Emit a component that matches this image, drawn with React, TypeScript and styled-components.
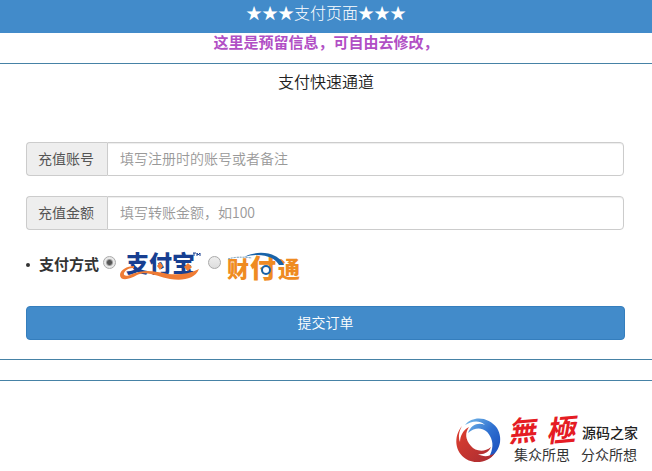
import React, { useState } from "react";
import styled, { createGlobalStyle } from "styled-components";

const GlobalStyle = createGlobalStyle`
  * { box-sizing: border-box; }
  body {
    margin: 0;
    background: #fff;
    color: #333;
    font-family: "Noto Sans CJK SC", sans-serif;
    font-size: 14px;
    line-height: 20px;
  }
`;

const Header = styled.header`
  display: flex;
  justify-content: center;
  padding: 2px 0 11px;
  background: #428bca;
  color: #fff;
`;

const HeaderTitle = styled.h1`
  margin: 0;
  font-size: 16px;
  line-height: 20px;
  font-weight: 300;
`;

const Notice = styled.p`
  margin: 0;
  padding-bottom: 12px;
  border-bottom: 1px solid #4682a6;
  text-align: center;
  font-size: 15px;
  line-height: 18px;
  font-weight: 700;
  color: #b14fc5;
`;

const Title = styled.h2`
  margin: 7px 0 51px;
  text-align: center;
  font-size: 16px;
  line-height: 20px;
  font-weight: 350;
  color: #222;
`;

const Form = styled.form`
  display: flex;
  flex-direction: column;
  gap: 20px;
  padding: 0 27px 19px 26px;
  border-bottom: 1px solid #4682a6;
`;

const Group = styled.div`
  display: flex;
  height: 34px;
  margin-right: 1px;
`;

const Addon = styled.label`
  display: flex;
  align-items: center;
  padding: 0 13px 2px 11px;
  border: 1px solid #ccc;
  border-right: 0;
  border-radius: 4px 0 0 4px;
  background: #eee;
  color: #555;
  white-space: nowrap;
`;

const Input = styled.input`
  flex: 1;
  min-width: 0;
  padding: 5px 12px 7px;
  border: 1px solid #ccc;
  border-radius: 0 4px 4px 0;
  box-shadow: inset 0 1px 1px rgba(0, 0, 0, 0.075);
  background: #fff;
  font: inherit;
  font-weight: 350;
  color: #555;
  &::placeholder { color: #999; opacity: 1; }
`;

const Methods = styled.fieldset`
  display: flex;
  align-items: center;
  height: 36px;
  margin: 0;
  padding: 0;
  border: 0;
`;

const MethodsLabel = styled.span`
  display: flex;
  align-items: center;
  gap: 9px;
  margin-right: 4px;
  padding-bottom: 8px;
  font-size: 15px;
  font-weight: 700;
  &::before {
    content: "";
    width: 4px;
    height: 4px;
    margin-top: 2px;
    border-radius: 50%;
    background: #333;
  }
`;

const Method = styled.label`
  display: flex;
  align-items: center;
  gap: 4px;
  margin-right: 6px;
`;

const Radio = styled.input`
  appearance: none;
  flex: none;
  width: 13px;
  height: 13px;
  margin: 0 0 11px;
  border: 1px solid #aaa;
  border-radius: 50%;
  background: linear-gradient(#eee, #ddd);
  &:checked {
    background: radial-gradient(circle, #555 0 2px, #e8e8e8 4px);
  }
`;

const Submit = styled.button`
  height: 34px;
  padding: 0 0 2px;
  border: 1px solid #357ebd;
  border-radius: 4px;
  background: #428bca;
  color: #fff;
  font: inherit;
  font-weight: 350;
`;

const Divider = styled.hr`
  margin: 20px 0 0;
  border: 0;
  border-top: 1px solid #4682a6;
`;

const Footer = styled.footer`
  display: flex;
  justify-content: flex-end;
  padding: 32px 10px 0;
`;

const Logo = styled.svg`
  display: block;
  flex: none;
  overflow: visible;
  font-family: "Noto Sans CJK SC", sans-serif;
`;

function AlipayLogo() {
  return (
    <Logo width="82" height="36" viewBox="0 0 82 36" role="img" aria-label="支付宝">
      <text x="6" y="22" fontSize="23" fontWeight="900" fill="#173f91">支付宝</text>
      <path d="M14 16C7 16 0 20 0 25C0 31 9 30 17 25C27 20 38 27 50 29C63 31 75 29 79 19C69 24 59 25 48 24C35 21 24 19 12 24C7 27 3 26 4 23C6 19 10 18 14 18Z" fill="#ef7c35" />
      <path d="M40 12l3 4-3 4-3-4zM68 13l4 4-4 4-4-4z" fill="#ef7c35" />
      <path d="M73 3h3M74 3v3M77 6V3l1 2L80 3v3" fill="none" stroke="#173f91" strokeWidth="1" />
    </Logo>
  );
}

function TenpayLogo() {
  return (
    <Logo width="80" height="36" viewBox="0 0 80 36" role="img" aria-label="财付通">
      <g fontWeight="900" fill="#ef8b22">
        <text x="2" y="27" fontSize="22">财</text>
        <text x="25" y="28" fontSize="26">付</text>
        <text x="53" y="27" fontSize="22">通</text>
      </g>
      <path d="M19 7C34 -1 54 3 59 15L54 15C50 7 36 2 19 7Z" fill="#1863a9" />
      <path d="M3 9Q12 6 27 8" fill="none" stroke="#668fad" strokeWidth="1" strokeDasharray="2 1" />
      <circle cx="41" cy="20" r="4" fill="#fff" stroke="#1863a9" strokeWidth="2" />
    </Logo>
  );
}

function SiteLogo() {
  return (
    <Logo width="186" height="54" viewBox="0 0 186 54" role="img" aria-label="無極源码之家 集众所思 分众所想">
      <defs>
        <linearGradient id="blue" x1="0" y1="0" x2="1" y2="1">
          <stop stopColor="#79bdea" /><stop offset="0.5" stopColor="#2f70d0" /><stop offset="1" stopColor="#1549ba" />
        </linearGradient>
        <linearGradient id="red" x1="0" y1="0" x2="1" y2="1">
          <stop stopColor="#e04030" /><stop offset="1" stopColor="#a72b31" />
        </linearGradient>
      </defs>
      <path d="M9 12C17 2 33 4 41 15C48 27 43 40 32 46C36 39 38 32 35 25C31 15 21 12 12 20C15 11 23 9 29 12C22 6 15 9 9 12Z" fill="url(#blue)" />
      <path d="M6 13C-3 24 -1 39 10 46C20 52 33 49 39 40C33 44 27 44 22 41C28 42 33 39 35 34C28 40 19 38 15 33C9 26 9 20 13 14C7 17 4 23 4 29C2 24 3 18 6 13Z" fill="url(#red)" />
      <g fontFamily="'Noto Sans CJK TC', sans-serif" fontStyle="italic" fontWeight="700" fill="#e51c24">
        <text x="52" y="28" fontSize="28" transform="rotate(-5 66 20)">無</text>
        <text x="90" y="28" fontSize="29" transform="rotate(-5 104 20)">極</text>
      </g>
      <text x="126" y="25" fontSize="14" fontWeight="500" fill="#222">源码之家</text>
      <text x="58" y="47" fontSize="14" fill="#333">集众所思</text>
      <text x="125" y="47" fontSize="14" fill="#333">分众所想</text>
    </Logo>
  );
}

export default function App() {
  const [method, setMethod] = useState("alipay");
  return (
    <>
      <GlobalStyle />
      <Header><HeaderTitle>★★★支付页面★★★</HeaderTitle></Header>
      <main>
        <Notice>这里是预留信息，可自由去修改，</Notice>
        <Title>支付快速通道</Title>
        <Form onSubmit={(e) => e.preventDefault()}>
          <Group>
            <Addon htmlFor="account">充值账号</Addon>
            <Input id="account" placeholder="填写注册时的账号或者备注" />
          </Group>
          <Group>
            <Addon htmlFor="amount">充值金额</Addon>
            <Input id="amount" placeholder="填写转账金额，如100" />
          </Group>
          <Methods aria-labelledby="methods">
            <MethodsLabel id="methods">支付方式</MethodsLabel>
            <Method>
              <Radio type="radio" name="method" value="alipay" aria-label="支付宝" checked={method === "alipay"} onChange={() => setMethod("alipay")} />
              <AlipayLogo />
            </Method>
            <Method>
              <Radio type="radio" name="method" value="tenpay" aria-label="财付通" checked={method === "tenpay"} onChange={() => setMethod("tenpay")} />
              <TenpayLogo />
            </Method>
          </Methods>
          <Submit type="submit">提交订单</Submit>
        </Form>
        <Divider />
      </main>
      <Footer><SiteLogo /></Footer>
    </>
  );
}
